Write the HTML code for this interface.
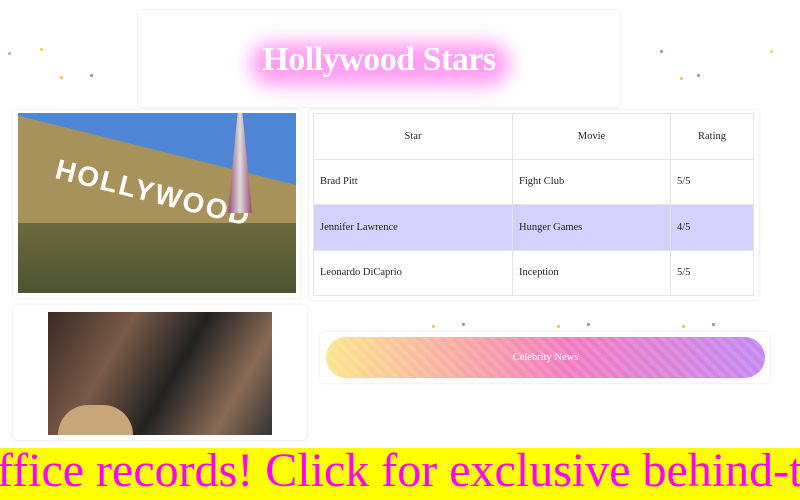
<!DOCTYPE html>
<html><head><style>
*{margin:0;padding:0;box-sizing:border-box}
body{width:800px;height:500px;overflow:hidden;background:#fff;position:relative;font-family:"Liberation Serif",serif;}
.card{position:absolute;background:#fff;border-radius:4px;box-shadow:0 0 3px rgba(0,0,0,.12);}
.dot{position:absolute;width:3px;height:3px;border-radius:50%}
table{border-collapse:collapse;position:absolute;left:313px;top:113px;width:441px;font-size:10.5px;color:#222}
td{border:1px solid #e4e4e4;height:45.5px;padding-left:6px}
</style></head><body>
<div class="card" style="left:138px;top:10px;width:482px;height:97px"></div>
<div style="position:absolute;left:250px;top:42px;width:260px;height:44px;border-radius:22px;background:#ff8ef0;filter:blur(9px);opacity:.85"></div>
<div style="position:absolute;left:138px;top:41px;width:482px;text-align:center;font-size:34px;font-weight:bold;color:#fff;letter-spacing:-0.5px">Hollywood Stars</div>

<div class="card" style="left:13px;top:110px;width:287px;height:188px"></div>
<div style="position:absolute;left:18px;top:113px;width:278px;height:180px;overflow:hidden;background:#4f86d6">
 <div style="position:absolute;left:-10px;top:40px;width:320px;height:160px;background:#a8925c;transform:skewY(14deg)"></div>
 <div style="position:absolute;left:0;top:110px;width:278px;height:70px;background:linear-gradient(#6d6a3e,#4c5431)"></div>
 <div style="position:absolute;left:38px;top:40px;color:#fff;font-family:'Liberation Sans',sans-serif;font-weight:bold;font-size:28px;transform:rotate(14deg);transform-origin:left;letter-spacing:2px">HOLLYWOOD</div>
 <div style="position:absolute;left:210px;top:0;width:24px;height:100px;background:linear-gradient(90deg,#9b4a6e,#ddd,#9b4a6e);clip-path:polygon(40% 0,60% 0,100% 100%,0 100%)"></div>
</div>

<div class="card" style="left:13px;top:305px;width:294px;height:135px"></div>
<div style="position:absolute;left:48px;top:312px;width:224px;height:123px;background:linear-gradient(120deg,#3a2a22,#7a5a48 30%,#222 55%,#8a6a55 80%,#333)"></div>
<div style="position:absolute;left:58px;top:405px;width:75px;height:30px;background:#c9a57a;border-radius:40px 40px 0 0"></div>

<div class="card" style="left:309px;top:110px;width:450px;height:190px"></div>
<table>
<tr><td style="text-align:center;padding:0;width:199px">Star</td><td style="text-align:center;padding:0;width:158px">Movie</td><td style="text-align:center;padding:0">Rating</td></tr>
<tr><td>Brad Pitt</td><td>Fight Club</td><td>5/5</td></tr>
<tr style="background:#d4d1ff"><td>Jennifer Lawrence</td><td>Hunger Games</td><td>4/5</td></tr>
<tr><td>Leonardo DiCaprio</td><td>Inception</td><td>5/5</td></tr>
</table>

<div class="card" style="left:320px;top:332px;width:450px;height:51px"></div>
<div style="position:absolute;left:326px;top:337px;width:439px;height:41px;border-radius:21px;background:repeating-linear-gradient(45deg,rgba(255,255,255,.12) 0 4px,transparent 4px 8px),linear-gradient(90deg,#fde58a,#f7a1a8 35%,#f27bc0 55%,#c388f2);color:#fff;font-size:10.5px;text-align:center;line-height:41px">Celebrity News</div>

<div class="dot" style="left:8px;top:52px;background:#9bb"></div>
<div class="dot" style="left:40px;top:48px;background:#fc4"></div>
<div class="dot" style="left:60px;top:76px;background:#fb4"></div>
<div class="dot" style="left:90px;top:74px;background:#79c"></div>
<div class="dot" style="left:660px;top:50px;background:#79c"></div>
<div class="dot" style="left:680px;top:77px;background:#fb4"></div>
<div class="dot" style="left:697px;top:74px;background:#79c"></div>
<div class="dot" style="left:770px;top:50px;background:#fc4"></div>
<div class="dot" style="left:432px;top:325px;background:#fb4"></div>
<div class="dot" style="left:462px;top:323px;background:#79c"></div>
<div class="dot" style="left:557px;top:325px;background:#fb4"></div>
<div class="dot" style="left:587px;top:323px;background:#79c"></div>
<div class="dot" style="left:682px;top:325px;background:#fb4"></div>
<div class="dot" style="left:712px;top:323px;background:#79c"></div>

<div style="position:absolute;left:0;top:448px;width:800px;height:52px;background:#ffff00;overflow:hidden;white-space:nowrap">
<div style="position:absolute;left:-3px;top:-5px;font-size:48px;color:#f0f;font-family:'Liberation Serif',serif">ffice records! Click for exclusive behind-the-scenes</div>
</div>
</body></html>
